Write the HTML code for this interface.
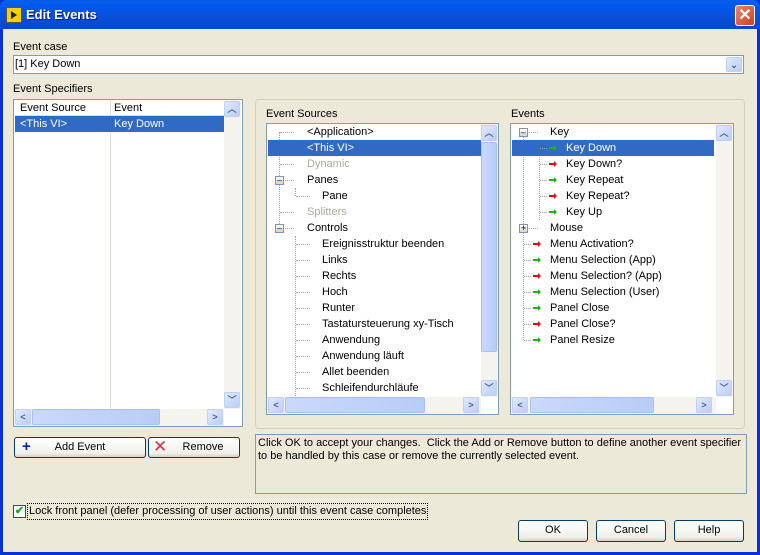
<!DOCTYPE html>
<html><head><meta charset="utf-8"><style>
*{box-sizing:border-box;margin:0;padding:0}
body{width:760px;height:555px;overflow:hidden;font-family:"Liberation Sans",sans-serif;font-size:11px;color:#000;position:relative;background:#0831d9}
.a{position:absolute}
.win{position:absolute;left:3px;top:29px;right:3px;bottom:3px;background:#ECE9D8}
.title{position:absolute;left:0;top:0;width:760px;height:30px;background:linear-gradient(#0a5fe8,#0058ee 20%,#0a4fd8 60%,#0346d0);border-radius:7px 7px 0 0}
.box{position:absolute;background:#fff;border:1px solid #7f9db9}
.lbl{position:absolute;white-space:nowrap}
.row{position:absolute;height:16px;line-height:16px;white-space:nowrap}
.sel{background:#316ac5;color:#fff}
.gray{color:#aca899}
.sbv{position:absolute;width:17px;background:#f4f3ee}
.sbh{position:absolute;height:17px;background:#f4f3ee}
.btn{position:absolute;border:1px solid #003c74;border-radius:3px;background:linear-gradient(#fff,#f0f0ea 80%,#d6d0c5);text-align:center;line-height:19px}
.sb{position:absolute;width:16px;height:16px;background:linear-gradient(135deg,#e1eafe,#b9cdf5);border:1px solid #bfd0f4;border-radius:2px;color:#4d6185;font-size:9px;text-align:center;line-height:14px;font-weight:bold}
.th{position:absolute;background:linear-gradient(90deg,#cad8fb,#b8cdf6);border:1px solid #a9bff0;border-radius:2px}
.dv{position:absolute;border-left:1px dotted #a0a0a0}
.dh{position:absolute;border-top:1px dotted #a0a0a0;height:0}
.pm{position:absolute;width:9px;height:9px;border:1px solid #7a93b7;background:linear-gradient(#fff,#d8d4c8);font-size:9px;line-height:6px;text-align:center;color:#000}
.ar{position:absolute;width:8px;height:6px}
</style></head><body>
<div class="title"></div>
<div class="a" style="left:6px;top:7px;width:16px;height:16px;background:#f5d000;border:1px solid #555"><div class="a" style="left:4px;top:3px;width:0;height:0;border-left:6px solid #222;border-top:4px solid transparent;border-bottom:4px solid transparent"></div></div>
<div class="lbl" style="left:26px;top:7px;color:#fff;font-weight:bold;font-size:13px;text-shadow:1px 1px #0a1e7a">Edit Events</div>
<div class="a" style="left:735px;top:5px;width:20px;height:21px;background:linear-gradient(135deg,#e8856c,#d0401c);border:1px solid #fff;border-radius:3px;color:#fff;font-size:16px;font-weight:bold;text-align:center;line-height:19px">✕</div>
<div class="win"></div>

<div class="lbl" style="left:13px;top:41px">Event case</div>
<div class="box" style="left:13px;top:55px;width:731px;height:19px"><div class="lbl" style="left:1px;top:2px">[1] Key Down</div><div class="sb" style="left:712px;top:1px;height:15px">⌄</div></div>
<div class="lbl" style="left:13px;top:83px">Event Specifiers</div>

<!-- left list -->
<div class="box" style="left:13px;top:99px;width:230px;height:328px">
 <div class="a" style="left:1px;top:0;width:209px;height:16px;border-bottom:1px solid #ddd"></div>
 <div class="row" style="left:6px;top:0">Event Source</div>
 <div class="a" style="left:96px;top:0;width:1px;height:309px;background:#e2e0d8"></div>
 <div class="row" style="left:100px;top:0">Event</div>
 <div class="row sel" style="left:1px;top:16px;width:209px"><span style="margin-left:5px">&lt;This VI&gt;</span></div>
 <div class="row" style="left:100px;top:16px;color:#fff">Key Down</div>
 <div class="sbv" style="left:210px;top:0;height:309px"><div class="sb" style="left:0;top:1px">︿</div><div class="sb" style="left:0;top:292px">﹀</div></div>
 <div class="sbh" style="left:0;top:309px;width:210px"><div class="sb" style="left:1px;top:0">&lt;</div><div class="th" style="left:18px;top:0;width:128px;height:16px"></div><div class="sb" style="left:193px;top:0">&gt;</div></div>
</div>
<div class="btn" style="left:14px;top:437px;width:132px;height:21px">Add Event<span class="a" style="left:7px;top:-1px;color:#0020c0;font-weight:bold;font-size:15px">+</span></div>
<div class="btn" style="left:148px;top:437px;width:92px;height:21px"><span class="a" style="left:4px;top:-1px;color:#e0304a;font-size:17px">✕</span><span style="margin-left:18px">Remove</span></div>

<!-- group -->
<div class="a" style="left:255px;top:99px;width:490px;height:330px;border:1px solid #d0d0bf;border-radius:4px"></div>
<div class="lbl" style="left:266px;top:108px">Event Sources</div>
<div class="lbl" style="left:511px;top:108px">Events</div>

<div class="box" style="left:266px;top:123px;width:233px;height:292px;overflow:hidden">
 <div class="dv" style="left:12px;top:8px;height:96px"></div>
 <div class="dv" style="left:28px;top:64px;height:8px"></div>
 <div class="dv" style="left:28px;top:112px;height:160px"></div>
 <div class="dh" style="left:13px;top:8px;width:14px"></div>
 <div class="dh" style="left:13px;top:24px;width:14px"></div>
 <div class="dh" style="left:13px;top:40px;width:14px"></div>
 <div class="dh" style="left:13px;top:56px;width:14px"></div>
 <div class="dh" style="left:29px;top:72px;width:14px"></div>
 <div class="dh" style="left:13px;top:88px;width:14px"></div>
 <div class="dh" style="left:13px;top:104px;width:14px"></div>
 <div class="row sel" style="left:1px;top:16px;width:213px"></div>
 <div class="row" style="left:40px;top:0">&lt;Application&gt;</div>
 <div class="row" style="left:40px;top:16px;color:#fff">&lt;This VI&gt;</div>
 <div class="row gray" style="left:40px;top:32px">Dynamic</div>
 <div class="pm" style="left:8px;top:52px">–</div>
 <div class="row" style="left:40px;top:48px">Panes</div>
 <div class="row" style="left:55px;top:64px">Pane</div>
 <div class="row gray" style="left:40px;top:80px">Splitters</div>
 <div class="pm" style="left:8px;top:100px">–</div>
 <div class="row" style="left:40px;top:96px">Controls</div>
 <div class="dh" style="left:29px;top:120px;width:14px"></div><div class="row" style="left:55px;top:112px">Ereignisstruktur beenden</div>
 <div class="dh" style="left:29px;top:136px;width:14px"></div><div class="row" style="left:55px;top:128px">Links</div>
 <div class="dh" style="left:29px;top:152px;width:14px"></div><div class="row" style="left:55px;top:144px">Rechts</div>
 <div class="dh" style="left:29px;top:168px;width:14px"></div><div class="row" style="left:55px;top:160px">Hoch</div>
 <div class="dh" style="left:29px;top:184px;width:14px"></div><div class="row" style="left:55px;top:176px">Runter</div>
 <div class="dh" style="left:29px;top:200px;width:14px"></div><div class="row" style="left:55px;top:192px">Tastatursteuerung xy-Tisch</div>
 <div class="dh" style="left:29px;top:216px;width:14px"></div><div class="row" style="left:55px;top:208px">Anwendung</div>
 <div class="dh" style="left:29px;top:232px;width:14px"></div><div class="row" style="left:55px;top:224px">Anwendung läuft</div>
 <div class="dh" style="left:29px;top:248px;width:14px"></div><div class="row" style="left:55px;top:240px">Allet beenden</div>
 <div class="dh" style="left:29px;top:264px;width:14px"></div><div class="row" style="left:55px;top:256px">Schleifendurchläufe</div>
 <div class="sbv" style="left:214px;top:0;height:273px"><div class="sb" style="left:0;top:1px">︿</div><div class="th" style="left:0;top:18px;width:16px;height:210px"></div><div class="sb" style="left:0;top:256px">﹀</div></div>
 <div class="sbh" style="left:0;top:273px;width:214px"><div class="sb" style="left:1px;top:0">&lt;</div><div class="th" style="left:18px;top:0;width:140px;height:16px"></div><div class="sb" style="left:196px;top:0">&gt;</div></div>
</div>

<div class="box" style="left:510px;top:123px;width:224px;height:292px;overflow:hidden">
 <div class="dv" style="left:12px;top:8px;height:208px"></div>
 <div class="dv" style="left:28px;top:16px;height:80px"></div>
 <div class="row sel" style="left:1px;top:16px;width:202px"></div>
 <div class="pm" style="left:8px;top:4px">–</div><div class="dh" style="left:13px;top:8px;width:14px"></div>
 <div class="row" style="left:39px;top:0">Key</div>
 <div id="kd"></div>
 <div class="row" style="left:55px;top:16px;color:#fff">Key Down</div>
 <div class="row" style="left:55px;top:32px">Key Down?</div>
 <div class="row" style="left:55px;top:48px">Key Repeat</div>
 <div class="row" style="left:55px;top:64px">Key Repeat?</div>
 <div class="row" style="left:55px;top:80px">Key Up</div>
 <div class="pm" style="left:8px;top:100px">+</div><div class="dh" style="left:13px;top:104px;width:14px"></div>
 <div class="row" style="left:39px;top:96px">Mouse</div>
 <div class="row" style="left:39px;top:112px">Menu Activation?</div>
 <div class="row" style="left:39px;top:128px">Menu Selection (App)</div>
 <div class="row" style="left:39px;top:144px">Menu Selection? (App)</div>
 <div class="row" style="left:39px;top:160px">Menu Selection (User)</div>
 <div class="row" style="left:39px;top:176px">Panel Close</div>
 <div class="row" style="left:39px;top:192px">Panel Close?</div>
 <div class="row" style="left:39px;top:208px">Panel Resize</div>
 <svg class="a" style="left:0;top:0" width="60" height="220">
  <g stroke="#a0a0a0" stroke-dasharray="1 1">
   <path d="M29 24.5h7M29 40.5h7M29 56.5h7M29 72.5h7M29 88.5h7M13 120.5h7M13 136.5h7M13 152.5h7M13 168.5h7M13 184.5h7M13 200.5h7M13 216.5h7"/>
  </g>
  <g>
   <path d="M38 23h5v-2l3 3-3 3v-2h-5z" fill="#20b020"/>
   <path d="M38 39h5v-2l3 3-3 3v-2h-5z" fill="#e01010"/>
   <path d="M38 55h5v-2l3 3-3 3v-2h-5z" fill="#20b020"/>
   <path d="M38 71h5v-2l3 3-3 3v-2h-5z" fill="#e01010"/>
   <path d="M38 87h5v-2l3 3-3 3v-2h-5z" fill="#20b020"/>
   <path d="M22 119h5v-2l3 3-3 3v-2h-5z" fill="#e01010"/>
   <path d="M22 135h5v-2l3 3-3 3v-2h-5z" fill="#20b020"/>
   <path d="M22 151h5v-2l3 3-3 3v-2h-5z" fill="#e01010"/>
   <path d="M22 167h5v-2l3 3-3 3v-2h-5z" fill="#20b020"/>
   <path d="M22 183h5v-2l3 3-3 3v-2h-5z" fill="#20b020"/>
   <path d="M22 199h5v-2l3 3-3 3v-2h-5z" fill="#e01010"/>
   <path d="M22 215h5v-2l3 3-3 3v-2h-5z" fill="#20b020"/>
  </g>
 </svg>
 <div class="sbv" style="left:205px;top:0;height:273px"><div class="sb" style="left:0;top:1px">︿</div><div class="sb" style="left:0;top:256px">﹀</div></div>
 <div class="sbh" style="left:0;top:273px;width:205px"><div class="sb" style="left:1px;top:0">&lt;</div><div class="th" style="left:19px;top:0;width:124px;height:16px"></div><div class="sb" style="left:185px;top:0">&gt;</div></div>
</div>

<div class="a" style="left:255px;top:434px;width:492px;height:60px;border:1px solid #7f9db9"></div>
<div class="lbl" style="left:258px;top:437px;line-height:13px">Click OK to accept your changes.&nbsp; Click the Add or Remove button to define another event specifier<br>to be handled by this case or remove the currently selected event.</div>

<div class="a" style="left:13px;top:505px;width:13px;height:13px;border:1px solid #1c5180;background:#fff;color:#21a121;font-size:11px;line-height:11px;text-align:center;font-weight:bold">✔</div>
<div class="lbl" style="left:27px;top:503px;border:1px dotted #000;padding:1px 1px;line-height:13px">Lock front panel (defer processing of user actions) until this event case completes</div>

<div class="btn" style="left:518px;top:520px;width:70px;height:22px">OK</div>
<div class="btn" style="left:596px;top:520px;width:70px;height:22px">Cancel</div>
<div class="btn" style="left:674px;top:520px;width:70px;height:22px">Help</div>
</body></html>
